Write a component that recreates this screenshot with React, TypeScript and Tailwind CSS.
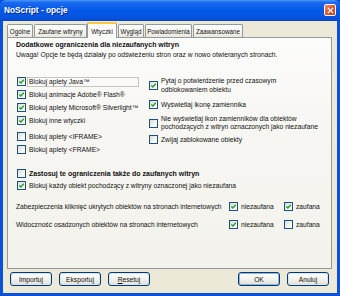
import React from "react";

function Box({ checked }: { checked?: boolean }) {
  return (
    <span className="relative inline-block w-[9px] h-[9px] shrink-0 border border-[#1c5180] bg-[linear-gradient(135deg,#dcdcd4_0%,#f4f4f0_60%,#ffffff_100%)]">
      {checked && (
        <svg viewBox="0 0 7 7" className="absolute left-0 top-0 w-[7px] h-[7px]">
          <path d="M1.3 3.4 L2.9 5 L5.8 1.8" fill="none" stroke="#21a121" strokeWidth="1.4" />
        </svg>
      )}
    </span>
  );
}

function Row({ checked, children, className = "" }: { checked?: boolean; children: React.ReactNode; className?: string }) {
  return (
    <div className={`flex items-center h-[13px] ${className}`}>
      <Box checked={checked} />
      <span className="ml-[3px] whitespace-nowrap">{children}</span>
    </div>
  );
}

function Tab({ label, w, selected }: { label: string; w: string; selected?: boolean }) {
  if (selected) {
    return (
      <div
        className={`${w} relative z-10 h-[16px] flex items-center justify-center border border-b-0 border-[#919b9c] rounded-t-[2px] bg-[#fcfcfb] border-t-[2px] border-t-[#ffc73c]`}
      >
        <span className="whitespace-nowrap">{label}</span>
      </div>
    );
  }
  return (
    <div
      className={`${w} h-[13px] mt-[2px] flex items-center justify-center border border-b-0 border-[#919b9c] rounded-t-[2px] bg-[linear-gradient(to_bottom,#ffffff_0%,#f6f5f0_60%,#e8e6dc_100%)]`}
    >
      <span className="whitespace-nowrap">{label}</span>
    </div>
  );
}

function Btn({ children, def }: { children: React.ReactNode; def?: boolean }) {
  return (
    <div
      className={`w-[42px] h-[14px] flex items-center justify-center rounded-[3px] border border-[#003c74] bg-[linear-gradient(to_bottom,#ffffff_0%,#f3f3ef_50%,#e0dfd6_100%)] ${
        def ? "shadow-[inset_0_0_0_1px_#8db2e3]" : "shadow-[inset_0_0_0_1px_#d8e4f4]"
      }`}
    >
      {children}
    </div>
  );
}

export default function App() {
  return (
    <div
      className="w-[340px] h-[296px] flex flex-col bg-[#0a52dc] text-[6.7px] leading-[9px] text-[#111] overflow-hidden"
      style={{ fontFamily: '"Liberation Sans", Arial, sans-serif' }}
    >
      {/* title bar */}
      <div className="h-[21px] shrink-0 flex items-center justify-between pl-[4px] pr-[4px] rounded-t-[6px] bg-[linear-gradient(to_bottom,#4a96f8_0%,#1a6af0_12%,#0559e8_45%,#0453e0_85%,#0846c4_100%)]">
        <span className="text-white font-bold text-[8.3px] [text-shadow:1px_1px_0_#0a2a8a]">NoScript - opcje</span>
        <div className="w-[12px] h-[12px] mt-[-1px] rounded-[2px] border border-white bg-[linear-gradient(135deg,#f08c6c_0%,#e0552c_50%,#c93c14_100%)] flex items-center justify-center">
          <svg viewBox="0 0 8 8" className="w-[7px] h-[7px]">
            <path d="M1 1 L7 7 M7 1 L1 7" stroke="#ffffff" strokeWidth="1.6" />
          </svg>
        </div>
      </div>
      {/* body */}
      <div className="flex-1 mx-[3px] mb-[3px] bg-[#ece9d8] flex flex-col pt-[1px]">
        <div className="flex items-start h-[16px] pl-[4px] text-[6.3px]">
          <Tab label="Ogólne" w="w-[26px]" />
          <div className="ml-[1px]" />
          <Tab label="Zaufane witryny" w="w-[53px]" />
          <Tab label="Wtyczki" w="w-[30px]" selected />
          <div className="ml-[1px]" />
          <Tab label="Wygląd" w="w-[26px]" />
          <div className="ml-[1px]" />
          <Tab label="Powiadomienia" w="w-[47px]" />
          <div className="ml-[1px]" />
          <Tab label="Zaawansowane" w="w-[50px]" />
        </div>
        <div className="mt-[-1px] ml-[4px] w-[325px] h-[232px] border border-[#919b9c] bg-[linear-gradient(to_bottom,#fcfcfb_0%,#f7f6f2_40%,#f3f2ec_100%)] pl-[8px] pt-[2px]">
          <div className="font-bold text-[7px] h-[10px] leading-[10px] whitespace-nowrap">Dodatkowe ograniczenia dla niezaufanych witryn</div>
          <div className="h-[10px] leading-[10px] whitespace-nowrap">Uwaga! Opcje te będą działały po odświeżeniu stron oraz w nowo otwieranych stronach.</div>
          <div className="flex mt-[15px]">
            <div className="w-[133px] pl-[1px] flex flex-col">
              <div className="flex items-center h-[13px]">
                <Box checked />
                <span className="ml-[1px] w-[112px] h-[10px] leading-[8px] border border-[#c4c4c0] pl-[1px] whitespace-nowrap">Blokuj aplety Java™</span>
              </div>
              <Row checked>Blokuj animacje Adobe® Flash®</Row>
              <Row checked>Blokuj aplety Microsoft® Silverlight™</Row>
              <Row checked>Blokuj inne wtyczki</Row>
              <Row className="mt-[3px]">Blokuj aplety &lt;IFRAME&gt;</Row>
              <Row>Blokuj aplety &lt;FRAME&gt;</Row>
            </div>
            <div className="flex flex-col pt-[1px]">
              <div className="flex items-center">
                <Box checked />
                <div className="ml-[3px] leading-[9px] whitespace-nowrap">
                  <div>Pytaj o potwierdzenie przed czasowym</div>
                  <div>odblokowaniem obiektu</div>
                </div>
              </div>
              <div className="flex items-center mt-[6px] h-[9px]">
                <Box checked />
                <span className="ml-[3px] whitespace-nowrap">Wyświetlaj ikonę zamiennika</span>
              </div>
              <div className="flex items-center mt-[6px]">
                <Box />
                <div className="ml-[3px] leading-[8px] whitespace-nowrap">
                  <div>Nie wyświetlaj ikon zamienników dla obiektów</div>
                  <div>pochodzących z witryn oznaczonych jako niezaufane</div>
                </div>
              </div>
              <div className="flex items-center mt-[4px] h-[9px]">
                <Box />
                <span className="ml-[3px] whitespace-nowrap">Zwijaj zablokowane obiekty</span>
              </div>
            </div>
          </div>
          <div className="pl-[1px] mt-[11px]">
            <div className="flex items-center h-[12px]">
              <Box />
              <span className="ml-[3px] font-bold text-[7px] whitespace-nowrap">Zastosuj te ograniczenia także do zaufanych witryn</span>
            </div>
            <div className="flex items-center h-[12px]">
              <Box checked />
              <span className="ml-[3px] whitespace-nowrap">Blokuj każdy obiekt pochodzący z witryny oznaczonej jako niezaufana</span>
            </div>
          </div>
          <div className="flex items-center h-[12px] mt-[9px]">
            <span className="w-[213px] shrink-0 whitespace-nowrap">Zabezpieczenia kliknięć ukrytych obiektów na stronach internetowych</span>
            <Box checked />
            <span className="ml-[3px] w-[43px] shrink-0">niezaufana</span>
            <Box checked />
            <span className="ml-[3px]">zaufana</span>
          </div>
          <div className="flex items-center h-[12px] mt-[6px]">
            <span className="w-[213px] shrink-0 whitespace-nowrap">Widoczność osadzonych obiektów na stronach internetowych</span>
            <Box checked />
            <span className="ml-[3px] w-[43px] shrink-0">niezaufana</span>
            <Box />
            <span className="ml-[3px]">zaufana</span>
          </div>
        </div>
        <div className="flex mt-[3px] pl-[7px]">
          <Btn>Importuj</Btn>
          <div className="ml-[7px]" />
          <Btn>Eksportuj</Btn>
          <div className="ml-[7px]" />
          <Btn>
            <span className="underline">R</span>esetuj
          </Btn>
          <div className="ml-[88px]" />
          <Btn def>OK</Btn>
          <div className="ml-[7px]" />
          <Btn>Anuluj</Btn>
        </div>
      </div>
    </div>
  );
}
